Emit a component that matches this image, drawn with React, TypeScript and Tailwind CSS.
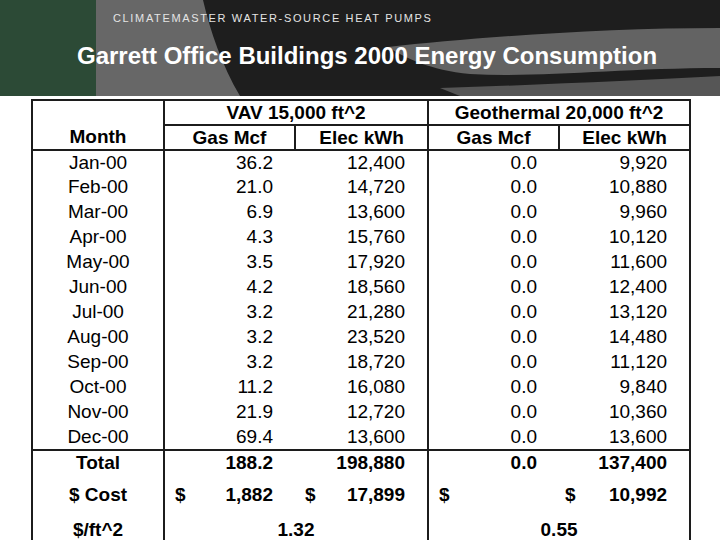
import React from 'react';

const months = [
  ['Jan-00', '36.2', '12,400', '0.0', '9,920'],
  ['Feb-00', '21.0', '14,720', '0.0', '10,880'],
  ['Mar-00', '6.9', '13,600', '0.0', '9,960'],
  ['Apr-00', '4.3', '15,760', '0.0', '10,120'],
  ['May-00', '3.5', '17,920', '0.0', '11,600'],
  ['Jun-00', '4.2', '18,560', '0.0', '12,400'],
  ['Jul-00', '3.2', '21,280', '0.0', '13,120'],
  ['Aug-00', '3.2', '23,520', '0.0', '14,480'],
  ['Sep-00', '3.2', '18,720', '0.0', '11,120'],
  ['Oct-00', '11.2', '16,080', '0.0', '9,840'],
  ['Nov-00', '21.9', '12,720', '0.0', '10,360'],
  ['Dec-00', '69.4', '13,600', '0.0', '13,600'],
];

function HeaderArt() {
  return (
    <svg className="absolute inset-0" width="720" height="96" viewBox="0 0 720 96">
      <rect width="720" height="96" fill="#1e1e1e" />
      <path d="M96 0 L203 0 C210 30 222 66 240 96 L96 96 Z" fill="#676767" />
      <rect width="96" height="96" fill="#2c4a36" />
      <path d="M388 47 C470 38 600 28 720 28 L720 68 C620 68 540 78 470 74 C430 70 405 58 388 47 Z" fill="#636363" />
      <path d="M440 88 C540 85 640 80 720 76 L720 96 L460 96 Z" fill="#565656" />
    </svg>
  );
}

export default function App() {
  // data cells: text sits a hair above the middle of each 25px row
  const cell = 'p-0 h-[25px] leading-[24px] align-top';
  const head = 'p-0 h-[23px] leading-[23px] border-2 border-[#1c1c1c]';
  const num = 'text-right pr-[22px]';
  const line = 'border-[#1c1c1c]';

  return (
    <div className="w-[720px] h-[540px] overflow-hidden bg-white font-['Liberation_Sans',Arial,sans-serif] text-black">
      {/* Slide header */}
      <div className="relative h-[96px]">
        <HeaderArt />
        <div className="relative pt-[12px] pl-[113px] text-[11px] leading-[13px] tracking-[0.15em] text-[#e4e4e4]">
          CLIMATEMASTER WATER-SOURCE HEAT PUMPS
        </div>
        <div className="relative mt-[17px] pl-[77px] text-[24px] leading-[28px] font-bold text-white">
          Garrett Office Buildings 2000 Energy Consumption
        </div>
      </div>

      {/* Table */}
      <table className="mt-[3px] ml-[31px] w-[658px] table-fixed border-collapse text-[19px]">
        <colgroup>
          <col className="w-[132px]" />
          <col className="w-[131px]" />
          <col className="w-[133px]" />
          <col className="w-[131px]" />
          <col className="w-[131px]" />
        </colgroup>
        <thead className="font-bold">
          <tr>
            <th rowSpan={2} className="p-0 pb-[1px] align-bottom h-[46px] leading-[23px] border-2 border-[#1c1c1c]">Month</th>
            <th colSpan={2} className={head}>VAV 15,000 ft^2</th>
            <th colSpan={2} className={head}>Geothermal 20,000 ft^2</th>
          </tr>
          <tr>
            <th className={head}>Gas Mcf</th>
            <th className={head}>Elec kWh</th>
            <th className={head}>Gas Mcf</th>
            <th className={head}>Elec kWh</th>
          </tr>
        </thead>
        <tbody>
          {months.map((r, i) => (
            <tr key={r[0]} className={i === months.length - 1 ? `border-b-2 ${line}` : ''}>
              <td className={`${cell} text-center border-x-2 ${line}`}>{r[0]}</td>
              <td className={`${cell} ${num}`}>{r[1]}</td>
              <td className={`${cell} ${num} border-r-2 ${line}`}>{r[2]}</td>
              <td className={`${cell} ${num}`}>{r[3]}</td>
              <td className={`${cell} ${num} border-r-2 ${line}`}>{r[4]}</td>
            </tr>
          ))}
          <tr className="font-bold">
            <td className={`${cell} text-center border-x-2 ${line}`}>Total</td>
            <td className={`${cell} ${num}`}>188.2</td>
            <td className={`${cell} ${num} border-r-2 ${line}`}>198,880</td>
            <td className={`${cell} ${num}`}>0.0</td>
            <td className={`${cell} ${num} border-r-2 ${line}`}>137,400</td>
          </tr>
          <tr className="font-bold">
            <td className={`p-0 h-[40px] text-center border-x-2 ${line}`}>$ Cost</td>
            <td className="p-0 h-[40px]">
              <div className="flex justify-between pl-[10px] pr-[22px]"><span>$</span><span>1,882</span></div>
            </td>
            <td className={`p-0 h-[40px] border-r-2 ${line}`}>
              <div className="flex justify-between pl-[10px] pr-[22px]"><span>$</span><span>17,899</span></div>
            </td>
            <td className="p-0 h-[40px]">
              <div className="pl-[10px]">$</div>
            </td>
            <td className={`p-0 h-[40px] border-r-2 ${line}`}>
              <div className="flex justify-between pl-[6px] pr-[22px]"><span>$</span><span>10,992</span></div>
            </td>
          </tr>
          <tr className="font-bold">
            <td className={`p-0 h-[34px] leading-[30px] align-top text-center border-x-2 ${line}`}>$/ft^2</td>
            <td colSpan={2} className={`p-0 h-[34px] leading-[30px] align-top text-center border-r-2 ${line}`}>1.32</td>
            <td colSpan={2} className={`p-0 h-[34px] leading-[30px] align-top text-center border-r-2 ${line}`}>0.55</td>
          </tr>
        </tbody>
      </table>
    </div>
  );
}
